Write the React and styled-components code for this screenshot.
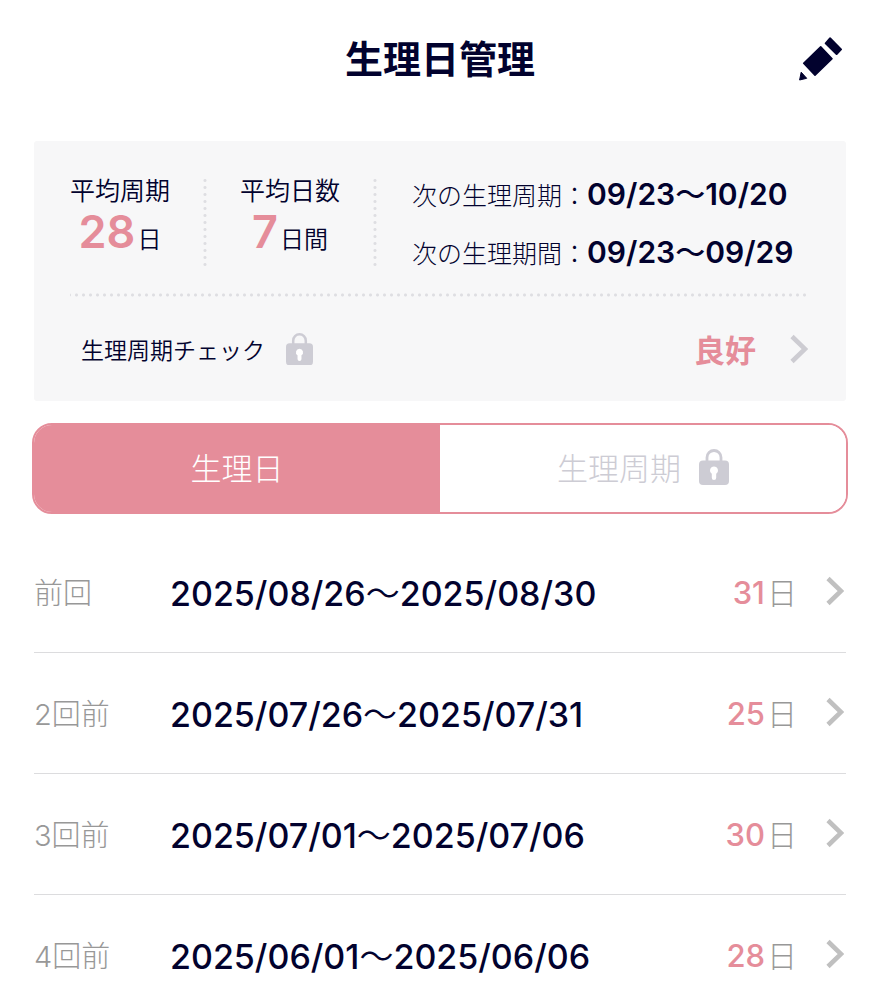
import React, { useState } from "react";
import styled, { createGlobalStyle } from "styled-components";

const navy = "#02022e";
const pink = "#e58d9a";

const records = [
  { id: 1, label: "前回", start: "2025/08/26", end: "2025/08/30", days: 31 },
  { id: 2, label: "2回前", start: "2025/07/26", end: "2025/07/31", days: 25 },
  { id: 3, label: "3回前", start: "2025/07/01", end: "2025/07/06", days: 30 },
  { id: 4, label: "4回前", start: "2025/06/01", end: "2025/06/06", days: 28 }
];

const PencilIcon = () => (
  <svg width="46" height="46" viewBox="0 0 46 46" fill="currentColor" stroke="currentColor" strokeLinejoin="round" aria-hidden="true">
    <path d="M22.7 9.8L34 21.7L17 38.2L5.7 26.3Z" strokeWidth="1.6" />
    <path d="M32 1.3L43 12.4L38.6 17L27.7 6.3Z" strokeWidth="2" />
    <path d="M3.2 35.2L8.7 41.3L1.6 43Z" strokeWidth="1" />
  </svg>
);

const LockIcon = ({ size }) => (
  <svg width={size} height={size * 1.2} viewBox="0 0 30 36" fill="none" aria-hidden="true">
    <path d="M8 15V8.5a7 7 0 0 1 14 0V15" stroke="#cdccd4" strokeWidth="2.8" />
    <rect y="11.5" width="30" height="24.5" rx="4" fill="#cdccd4" />
    <path d="M15 17.5a4 4 0 0 1 2.2 7.3v4a2.2 2.2 0 0 1-4.4 0v-4a4 4 0 0 1 2.2-7.3z" fill="#fff" />
  </svg>
);

const ChevronIcon = () => (
  <svg width="18" height="30" viewBox="0 0 18 30" fill="none" aria-hidden="true">
    <path d="M2 2.5L15 15L2 27.5" stroke="currentColor" strokeWidth="4.6" />
  </svg>
);

const App = () => {
  const [tab, setTab] = useState("days");
  return (
    <>
      <GlobalStyle />
      <Header>
        <Title>生理日管理</Title>
        <EditButton type="button" aria-label="編集">
          <PencilIcon />
        </EditButton>
      </Header>
      <main>
        <Summary>
          <Stats>
            <Stat>
              <StatLabel>平均周期</StatLabel>
              <StatValue><strong>28</strong>日</StatValue>
            </Stat>
            <Stat>
              <StatLabel>平均日数</StatLabel>
              <StatValue><strong>7</strong>日間</StatValue>
            </Stat>
            <NextDates>
              <p>次の生理周期：<strong>09/23<Wave $weight={500}>〜</Wave>10/20</strong></p>
              <p>次の生理期間：<strong>09/23<Wave $weight={500}>〜</Wave>09/29</strong></p>
            </NextDates>
          </Stats>
          <DottedLine />
          <CheckButton type="button">
            生理周期チェック
            <LockIcon size={27} />
            <Status>良好</Status>
            <ChevronIcon />
          </CheckButton>
        </Summary>
        <Tabs role="tablist">
          <Tab type="button" role="tab" aria-selected={tab === "days"} $active={tab === "days"} onClick={() => setTab("days")}>
            生理日
          </Tab>
          <Tab type="button" role="tab" aria-selected={tab === "cycle"} $active={tab === "cycle"} onClick={() => setTab("cycle")}>
            生理周期
            <LockIcon size={30} />
          </Tab>
        </Tabs>
        <RecordList>
          {records.map(record => (
            <li key={record.id}>
              <RecordLink href={`#record-${record.id}`}>
                <RecordLabel>{record.label}</RecordLabel>
                <Period>{record.start}<Wave $weight={350}>〜</Wave>{record.end}</Period>
                <Days><strong>{record.days}</strong>日</Days>
                <ChevronIcon />
              </RecordLink>
            </li>
          ))}
        </RecordList>
      </main>
    </>
  );
};

export default App;


const GlobalStyle = createGlobalStyle`
  * {
    box-sizing: border-box;
  }

  body {
    margin: 0;
    background: #fff;
    color: ${navy};
    font-family: Inter, "Noto Sans CJK JP", sans-serif;
    font-weight: 300;
  }

  h1, p, ul {
    margin: 0;
    padding: 0;
  }

  button {
    border: 0;
    padding: 0;
    background: none;
    color: inherit;
    font: inherit;
    cursor: pointer;
  }

  svg {
    display: block;
    flex: none;
  }
`;

const Header = styled.header`
  display: grid;
  grid-template-columns: 1fr auto 1fr;
  align-items: center;
  padding: 30px 36px 51px;
`;

const Title = styled.h1`
  grid-column: 2;
  padding-bottom: 2px;
  font-size: 38px;
  font-weight: 700;
  line-height: 58px;
`;

const EditButton = styled.button`
  justify-self: end;
`;

const Summary = styled.section`
  margin: 0 34px;
  padding: 36px 36px 0;
  border-radius: 3px;
  background: #f7f7f8;
`;

const Stats = styled.div`
  display: flex;
`;

const Stat = styled.div`
  margin-right: 33px;
  padding-right: 37px;
  height: 92px;
  background: radial-gradient(circle, #dedee2 1px, transparent 2px) right top / 4px 7px repeat-y;
  font-weight: 350;
  text-align: center;
`;

const StatLabel = styled.p`
  font-size: 25px;
  line-height: 28px;
`;

const StatValue = styled.p`
  font-size: 24px;
  line-height: 54px;

  strong {
    margin-right: 2px;
    color: ${pink};
    font-size: 45px;
    font-weight: 600;
  }
`;

const NextDates = styled.div`
  display: flex;
  flex-direction: column;
  gap: 20px;
  height: 94px;
  margin-left: 2px;
  font-size: 25px;
  line-height: 38px;
  white-space: nowrap;

  strong {
    font-size: 30px;
    font-weight: 600;
    line-height: 24px;
  }
`;

const Wave = styled.span`
  font-weight: ${props => props.$weight};
`;

const DottedLine = styled.div`
  height: 4px;
  margin: 22px 2px 0 0;
  background: radial-gradient(circle, #dedee2 1px, transparent 2px) right top / 7px 4px repeat-x;
`;

const CheckButton = styled.button`
  display: flex;
  align-items: center;
  width: 100%;
  height: 104px;
  padding: 0 2px 0 11px;
  font-size: 23px;
  font-weight: 350;

  svg:first-of-type {
    margin-left: 21px;
  }

  svg:last-of-type {
    color: #cdccd2;
  }
`;

const Status = styled.span`
  margin: 0 34px 0 auto;
  padding-bottom: 2px;
  color: ${pink};
  font-size: 31px;
  font-weight: 700;
`;

const Tabs = styled.div`
  display: flex;
  margin: 22px 32px 18px;
  border: 2px solid ${pink};
  border-radius: 20px;
  overflow: hidden;
`;

const Tab = styled.button`
  display: flex;
  flex: 1;
  align-items: center;
  justify-content: center;
  gap: 18px;
  height: 87px;
  padding-bottom: 4px;
  background: ${props => (props.$active ? pink : "#fff")};
  color: ${props => (props.$active ? "#fff" : "#cdccd4")};
  font-size: 31px;
`;

const RecordList = styled.ul`
  margin: 0 34px;
  list-style: none;
`;

const RecordLink = styled.a`
  display: grid;
  grid-template-columns: 136px 1fr auto auto;
  align-items: center;
  height: 121px;
  padding: 0 2px 2px 0;
  border-bottom: 1px solid #dcdcde;
  color: #c0c0c0;
  text-decoration: none;
`;

const RecordLabel = styled.span`
  color: #989898;
  font-size: 29px;
`;

const Period = styled.span`
  color: ${navy};
  font-size: 34px;
  font-weight: 500;
  white-space: nowrap;
`;

const Days = styled.span`
  margin-right: 29px;
  color: #989898;
  font-size: 30px;

  strong {
    margin-right: 2px;
    color: ${pink};
    font-size: 31px;
    font-weight: 500;
  }
`;
